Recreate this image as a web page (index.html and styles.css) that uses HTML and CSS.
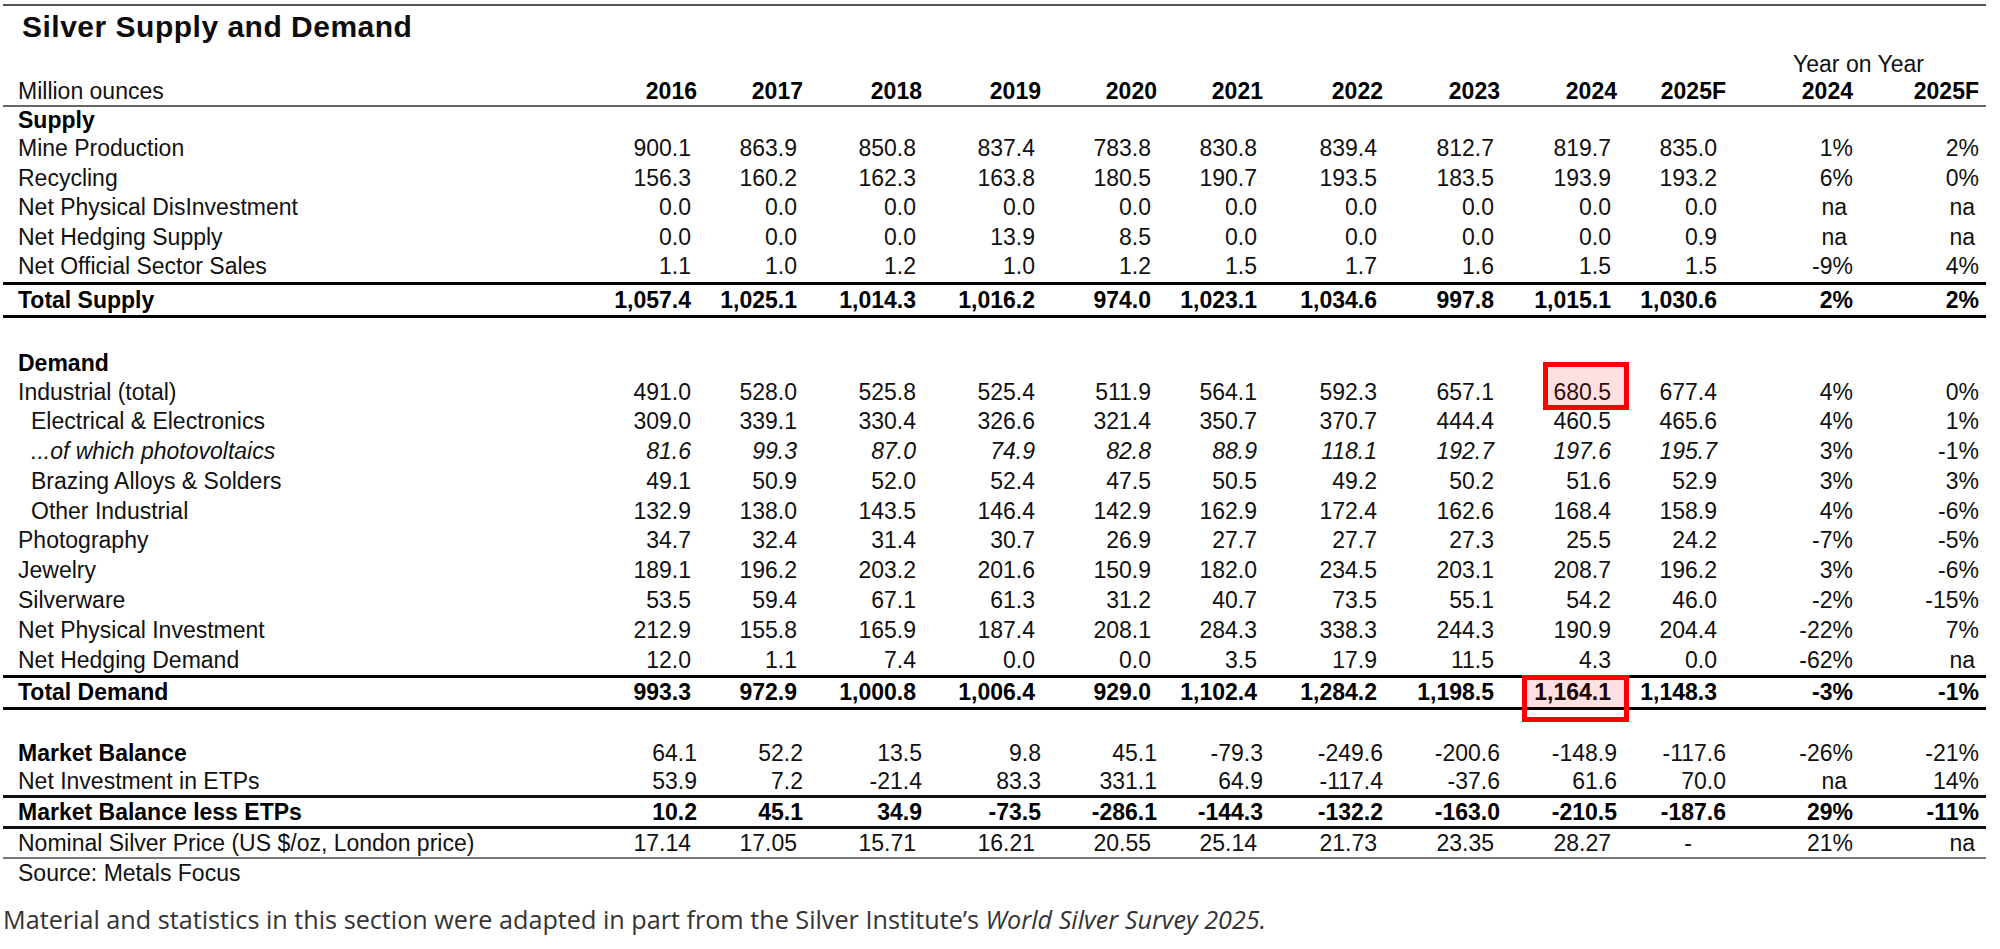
FILE: index.html
```html
<!DOCTYPE html>
<html lang="en">
<head>
<meta charset="utf-8">
<title>Silver Supply and Demand</title>
<link rel="stylesheet" href="styles.css">
</head>
<body>
<main class="page">
  <section class="sheet">
    <h1 class="title">Silver Supply and Demand</h1>
    <table class="data">
      <colgroup>
        <col class="c-label"><col class="c-16"><col class="c-17"><col class="c-18"><col class="c-19"><col class="c-20"><col class="c-21"><col class="c-22"><col class="c-23"><col class="c-24"><col class="c-25"><col class="c-y24"><col class="c-y25">
      </colgroup>
      <tbody>
        <tr class="yoy"><td colspan="11"></td><td colspan="2" class="yoyh">Year on Year</td></tr>
        <tr class="head"><td>Million ounces</td><td>2016</td><td>2017</td><td>2018</td><td>2019</td><td>2020</td><td>2021</td><td>2022</td><td>2023</td><td>2024</td><td>2025F</td><td>2024</td><td>2025F</td></tr>
        <tr class="cat cat-supply"><td>Supply</td><td></td><td></td><td></td><td></td><td></td><td></td><td></td><td></td><td></td><td></td><td></td><td></td></tr>
        <tr><td>Mine Production</td><td>900.1</td><td>863.9</td><td>850.8</td><td>837.4</td><td>783.8</td><td>830.8</td><td>839.4</td><td>812.7</td><td>819.7</td><td>835.0</td><td>1%</td><td>2%</td></tr>
        <tr><td>Recycling</td><td>156.3</td><td>160.2</td><td>162.3</td><td>163.8</td><td>180.5</td><td>190.7</td><td>193.5</td><td>183.5</td><td>193.9</td><td>193.2</td><td>6%</td><td>0%</td></tr>
        <tr><td>Net Physical DisInvestment</td><td>0.0</td><td>0.0</td><td>0.0</td><td>0.0</td><td>0.0</td><td>0.0</td><td>0.0</td><td>0.0</td><td>0.0</td><td>0.0</td><td class="na">na</td><td class="na">na</td></tr>
        <tr><td>Net Hedging Supply</td><td>0.0</td><td>0.0</td><td>0.0</td><td>13.9</td><td>8.5</td><td>0.0</td><td>0.0</td><td>0.0</td><td>0.0</td><td>0.9</td><td class="na">na</td><td class="na">na</td></tr>
        <tr><td>Net Official Sector Sales</td><td>1.1</td><td>1.0</td><td>1.2</td><td>1.0</td><td>1.2</td><td>1.5</td><td>1.7</td><td>1.6</td><td>1.5</td><td>1.5</td><td>-9%</td><td>4%</td></tr>
        <tr class="total"><td>Total Supply</td><td>1,057.4</td><td>1,025.1</td><td>1,014.3</td><td>1,016.2</td><td>974.0</td><td>1,023.1</td><td>1,034.6</td><td>997.8</td><td>1,015.1</td><td>1,030.6</td><td>2%</td><td>2%</td></tr>
        <tr class="gap gap-a"><td colspan="13"></td></tr>
        <tr class="cat cat-demand"><td>Demand</td><td></td><td></td><td></td><td></td><td></td><td></td><td></td><td></td><td></td><td></td><td></td><td></td></tr>
        <tr class="dm"><td>Industrial (total)</td><td>491.0</td><td>528.0</td><td>525.8</td><td>525.4</td><td>511.9</td><td>564.1</td><td>592.3</td><td>657.1</td><td class="mark">680.5<span class="hl hl-a"></span></td><td>677.4</td><td>4%</td><td>0%</td></tr>
        <tr class="dm"><td class="ind">Electrical &amp; Electronics</td><td>309.0</td><td>339.1</td><td>330.4</td><td>326.6</td><td>321.4</td><td>350.7</td><td>370.7</td><td>444.4</td><td>460.5</td><td>465.6</td><td>4%</td><td>1%</td></tr>
        <tr class="dm pv"><td class="ind">...of which photovoltaics</td><td>81.6</td><td>99.3</td><td>87.0</td><td>74.9</td><td>82.8</td><td>88.9</td><td>118.1</td><td>192.7</td><td>197.6</td><td>195.7</td><td>3%</td><td>-1%</td></tr>
        <tr class="dm"><td class="ind">Brazing Alloys &amp; Solders</td><td>49.1</td><td>50.9</td><td>52.0</td><td>52.4</td><td>47.5</td><td>50.5</td><td>49.2</td><td>50.2</td><td>51.6</td><td>52.9</td><td>3%</td><td>3%</td></tr>
        <tr class="dm"><td class="ind">Other Industrial</td><td>132.9</td><td>138.0</td><td>143.5</td><td>146.4</td><td>142.9</td><td>162.9</td><td>172.4</td><td>162.6</td><td>168.4</td><td>158.9</td><td>4%</td><td>-6%</td></tr>
        <tr class="dm"><td>Photography</td><td>34.7</td><td>32.4</td><td>31.4</td><td>30.7</td><td>26.9</td><td>27.7</td><td>27.7</td><td>27.3</td><td>25.5</td><td>24.2</td><td>-7%</td><td>-5%</td></tr>
        <tr class="dm"><td>Jewelry</td><td>189.1</td><td>196.2</td><td>203.2</td><td>201.6</td><td>150.9</td><td>182.0</td><td>234.5</td><td>203.1</td><td>208.7</td><td>196.2</td><td>3%</td><td>-6%</td></tr>
        <tr class="dm"><td>Silverware</td><td>53.5</td><td>59.4</td><td>67.1</td><td>61.3</td><td>31.2</td><td>40.7</td><td>73.5</td><td>55.1</td><td>54.2</td><td>46.0</td><td>-2%</td><td>-15%</td></tr>
        <tr class="dm"><td>Net Physical Investment</td><td>212.9</td><td>155.8</td><td>165.9</td><td>187.4</td><td>208.1</td><td>284.3</td><td>338.3</td><td>244.3</td><td>190.9</td><td>204.4</td><td>-22%</td><td>7%</td></tr>
        <tr class="dm"><td>Net Hedging Demand</td><td>12.0</td><td>1.1</td><td>7.4</td><td>0.0</td><td>0.0</td><td>3.5</td><td>17.9</td><td>11.5</td><td>4.3</td><td>0.0</td><td>-62%</td><td class="na">na</td></tr>
        <tr class="total total-demand"><td>Total Demand</td><td>993.3</td><td>972.9</td><td>1,000.8</td><td>1,006.4</td><td>929.0</td><td>1,102.4</td><td>1,284.2</td><td>1,198.5</td><td class="mark">1,164.1<span class="hl hl-b"></span></td><td>1,148.3</td><td>-3%</td><td>-1%</td></tr>
        <tr class="gap gap-b"><td colspan="13"></td></tr>
        <tr class="mb"><td class="strong">Market Balance</td><td>64.1</td><td>52.2</td><td>13.5</td><td>9.8</td><td>45.1</td><td>-79.3</td><td>-249.6</td><td>-200.6</td><td>-148.9</td><td>-117.6</td><td>-26%</td><td>-21%</td></tr>
        <tr class="mb etp"><td>Net Investment in ETPs</td><td>53.9</td><td>7.2</td><td>-21.4</td><td>83.3</td><td>331.1</td><td>64.9</td><td>-117.4</td><td>-37.6</td><td>61.6</td><td>70.0</td><td class="na">na</td><td>14%</td></tr>
        <tr class="mb mbless"><td>Market Balance less ETPs</td><td>10.2</td><td>45.1</td><td>34.9</td><td>-73.5</td><td>-286.1</td><td>-144.3</td><td>-132.2</td><td>-163.0</td><td>-210.5</td><td>-187.6</td><td>29%</td><td>-11%</td></tr>
        <tr class="price"><td>Nominal Silver Price (US $/oz, London price)</td><td>17.14</td><td>17.05</td><td>15.71</td><td>16.21</td><td>20.55</td><td>25.14</td><td>21.73</td><td>23.35</td><td>28.27</td><td class="dash">-</td><td>21%</td><td class="na">na</td></tr>
        <tr class="source"><td>Source: Metals Focus</td><td colspan="12"></td></tr>
      </tbody>
    </table>
  </section>
  <p class="note">Material and statistics in this section were adapted in part from the Silver Institute’s <em>World Silver Survey 2025.</em></p>
</main>
</body>
</html>
```
FILE: styles.css
```css
* { box-sizing: border-box; }

html, body {
  margin: 0;
  padding: 0;
  background: #ffffff;
}

body {
  font-family: "Liberation Sans", Arial, sans-serif;
  color: #111111;
}

.page {
  width: 1990px;
  padding: 4px 0 0 3px;
}

.sheet {
  width: 1983px;
  border-top: 2px solid #555555;
}

.title {
  margin: 3px 0 0;
  height: 43px;
  padding-left: 19px;
  font-size: 30px;
  line-height: 36px;
  font-weight: 700;
  letter-spacing: 0.5px;
  color: #0d0d0d;
}

/* ---------- table ---------- */
.data {
  width: 1983px;
  table-layout: fixed;
  border-collapse: separate;
  border-spacing: 0;
  font-size: 23px;
}

.c-label { width: 594px; }
.c-16 { width: 100px; }
.c-17 { width: 106px; }
.c-18 { width: 119px; }
.c-19 { width: 119px; }
.c-20 { width: 116px; }
.c-21 { width: 106px; }
.c-22 { width: 120px; }
.c-23 { width: 117px; }
.c-24 { width: 117px; }
.c-25 { width: 109px; }
.c-y24 { width: 127px; }
.c-y25 { width: 133px; }

.data td {
  padding: 0 6px 0 0;
  text-align: right;
  white-space: nowrap;
  line-height: 29.5px;
  font-weight: 400;
}

.data td:first-child {
  padding: 0 0 0 15px;
  text-align: left;
}

.data td:nth-child(11) { padding-right: 9px; }
.data td:nth-child(12) { padding-right: 0; }
.data td:nth-child(13) { padding-right: 7px; }

.data td.ind { padding-left: 28px; }

.data td.na:nth-child(12) { padding-right: 6px; }
.data td.na:nth-child(13) { padding-right: 11px; }
.data td.dash { padding-right: 34px; }

/* Year-on-year caption row */
.data .yoy td { line-height: 25px; padding: 0; }
.data .yoy td.yoyh {
  text-align: center;
  padding: 0 7px 0 12px;
}

/* Column header row */
.data .head td {
  line-height: 28px;
  border-bottom: 2px solid #666666;
}
.data .head td:nth-child(-n+11) { padding-right: 0; }
.data .head td:first-child { padding-left: 15px; }
.data .head td + td { font-weight: 700; color: #000; }

/* Section titles */
.data .cat td { font-weight: 700; color: #000; }
.data .cat-supply td { line-height: 27px; }
.data .cat-demand td { line-height: 29px; }

/* Demand detail rows */
.data .dm td { line-height: 29.8px; }

/* Totals */
.data .total td {
  font-weight: 700;
  color: #000;
  line-height: 30px;
  border-top: 3px solid #000000;
  border-bottom: 3px solid #000000;
}
.data .total-demand td { line-height: 29px; }

.data .gap-a td { height: 31px; line-height: 31px; padding: 0; }
.data .gap-b td { height: 28.5px; line-height: 28.5px; padding: 0; }

.data .pv td { font-style: italic; }
.data .pv td:nth-child(n+12) { font-style: normal; }

/* Market balance block sits slightly further right */
.data .mb td:nth-child(-n+11) { padding-right: 0; }
.data .mb td:first-child { padding-right: 0; }
.data td.strong { font-weight: 700; color: #000; }
.data .etp td { line-height: 26.5px; }
.data .mbless td {
  font-weight: 700;
  color: #000;
  line-height: 28px;
  border-top: 3px solid #111111;
  border-bottom: 3px solid #111111;
}

.data .price td {
  line-height: 28px;
  border-bottom: 2px solid #7a7a7a;
}

.data .source td { line-height: 28px; }

/* Highlight boxes drawn over the sheet */
.data td.mark { position: relative; }
.hl {
  position: absolute;
  border: 5px solid #ff0000;
  pointer-events: none;
}
.hl-a {
  left: 43px;
  right: -12px;
  top: -15.5px;
  bottom: -3px;
  background: rgba(255, 0, 0, 0.12);
}
.hl-b {
  left: 22px;
  right: -12px;
  top: -3px;
  bottom: -15px;
  background: linear-gradient(to bottom, rgba(255, 0, 0, 0.12) 0, rgba(255, 0, 0, 0.12) 76%, transparent 76%);
}

/* Footer note */
.note {
  margin: 15px 0 0;
  font-family: "Open Sans", "Liberation Sans", sans-serif;
  font-size: 25.2px;
  line-height: 34px;
  color: #333333;
  white-space: nowrap;
}
```
